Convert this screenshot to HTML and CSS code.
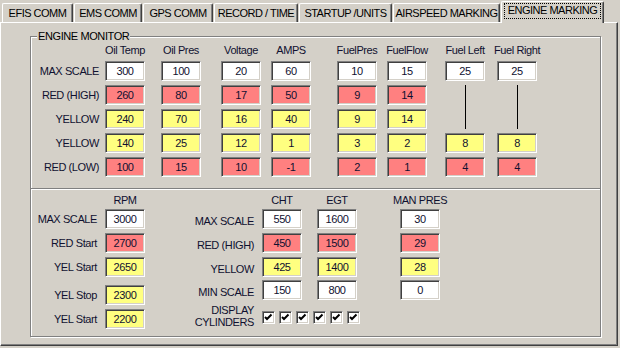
FILE: index.html
```html
<!DOCTYPE html>
<html lang="en">
<head>
  <meta charset="UTF-8" />
  <title>Engine Marking</title>
  <link rel="stylesheet" href="styles.css">
</head>
<body>
  <div class="tabs">
    <div class="tab tab-efis">EFIS COMM</div>
    <div class="tab tab-ems">EMS COMM</div>
    <div class="tab tab-gps">GPS COMM</div>
    <div class="tab tab-record">RECORD / TIME</div>
    <div class="tab tab-startup">STARTUP /UNITS</div>
    <div class="tab tab-airspeed">AIRSPEED MARKING</div>
    <div class="tab tab-engine active"><span class="focus">ENGINE MARKING</span></div>
  </div>

  <div class="page">
    <div class="group">
      <span class="group-title">ENGINE MONITOR</span>

      <div class="monitor">
        <div></div>
        <div class="head">Oil Temp</div>
        <div class="head">Oil Pres</div>
        <div class="head">Voltage</div>
        <div class="head">AMPS</div>
        <div class="head">FuelPres</div>
        <div class="head">FuelFlow</div>
        <div class="head">Fuel Left</div>
        <div class="head">Fuel Right</div>

        <div class="label">MAX SCALE</div>
        <div class="field">300</div>
        <div class="field">100</div>
        <div class="field">20</div>
        <div class="field">60</div>
        <div class="field">10</div>
        <div class="field">15</div>
        <div class="field">25</div>
        <div class="field">25</div>

        <div class="link link-left"></div>
        <div class="link link-right"></div>

        <div class="label">RED (HIGH)</div>
        <div class="field red">260</div>
        <div class="field red">80</div>
        <div class="field red">17</div>
        <div class="field red">50</div>
        <div class="field red">9</div>
        <div class="field red">14</div>

        <div class="label">YELLOW</div>
        <div class="field yellow">240</div>
        <div class="field yellow">70</div>
        <div class="field yellow">16</div>
        <div class="field yellow">40</div>
        <div class="field yellow">9</div>
        <div class="field yellow">14</div>

        <div class="label">YELLOW</div>
        <div class="field yellow">140</div>
        <div class="field yellow">25</div>
        <div class="field yellow">12</div>
        <div class="field yellow">1</div>
        <div class="field yellow">3</div>
        <div class="field yellow">2</div>
        <div class="field yellow">8</div>
        <div class="field yellow">8</div>

        <div class="label">RED (LOW)</div>
        <div class="field red">100</div>
        <div class="field red">15</div>
        <div class="field red">10</div>
        <div class="field red">-1</div>
        <div class="field red">2</div>
        <div class="field red">1</div>
        <div class="field red">4</div>
        <div class="field red">4</div>
      </div>

      <div class="lower">
        <div class="block rpm">
          <div class="row top"><div class="label"></div><div class="head">RPM</div></div>
          <div class="row"><div class="label">MAX SCALE</div><div class="field">3000</div></div>
          <div class="row"><div class="label">RED Start</div><div class="field red">2700</div></div>
          <div class="row"><div class="label">YEL Start</div><div class="field yellow">2650</div></div>
          <div class="row spaced"><div class="label">YEL Stop</div><div class="field yellow">2300</div></div>
          <div class="row"><div class="label">YEL Start</div><div class="field yellow">2200</div></div>
        </div>

        <div class="block temps">
          <div class="row top"><div class="label"></div><div class="head">CHT</div><div class="head egt">EGT</div></div>
          <div class="row"><div class="label">MAX SCALE</div><div class="field">550</div><div class="field egt">1600</div></div>
          <div class="row"><div class="label">RED (HIGH)</div><div class="field red">450</div><div class="field red egt">1500</div></div>
          <div class="row"><div class="label">YELLOW</div><div class="field yellow">425</div><div class="field yellow egt">1400</div></div>
          <div class="row tight"><div class="label">MIN SCALE</div><div class="field">150</div><div class="field egt">800</div></div>
          <div class="row checks">
            <div class="label">DISPLAY<br>CYLINDERS</div>
            <div class="boxes">
              <span class="check"><svg viewBox="0 0 11 11" width="11" height="11"><path d="M2 5 L4 7 L8.5 2.5" /></svg></span>
              <span class="check"><svg viewBox="0 0 11 11" width="11" height="11"><path d="M2 5 L4 7 L8.5 2.5" /></svg></span>
              <span class="check"><svg viewBox="0 0 11 11" width="11" height="11"><path d="M2 5 L4 7 L8.5 2.5" /></svg></span>
              <span class="check"><svg viewBox="0 0 11 11" width="11" height="11"><path d="M2 5 L4 7 L8.5 2.5" /></svg></span>
              <span class="check"><svg viewBox="0 0 11 11" width="11" height="11"><path d="M2 5 L4 7 L8.5 2.5" /></svg></span>
              <span class="check"><svg viewBox="0 0 11 11" width="11" height="11"><path d="M2 5 L4 7 L8.5 2.5" /></svg></span>
            </div>
          </div>
        </div>

        <div class="block man">
          <div class="row top"><div class="head">MAN PRES</div></div>
          <div class="row"><div class="field">30</div></div>
          <div class="row"><div class="field red">29</div></div>
          <div class="row"><div class="field yellow">28</div></div>
          <div class="row tight"><div class="field">0</div></div>
        </div>
      </div>
    </div>
  </div>
</body>
</html>
```

FILE: styles.css
```css
body {
  margin: 0;
  background-color: #d4d0c8;
  color: #101030;
  font-family: 'Liberation Sans', Arial, sans-serif;
  font-size: 11px;
  letter-spacing: -0.4px;
}

/* tab strip */
.tabs {
  display: flex;
  align-items: flex-end;
  gap: 1px;
  height: 22px;
  padding-left: 2px;
}
.tab {
  box-sizing: border-box;
  height: 19px;
  padding-top: 3px;
  border-top: 1px solid #fff;
  border-left: 1px solid #fff;
  border-right: 1px solid #404040;
  border-radius: 2px 2px 0 0;
  box-shadow: inset -1px 0 0 #808080;
  background-color: #d4d0c8;
  color: #000;
  line-height: 13px;
  text-align: center;
  white-space: nowrap;
  letter-spacing: -0.5px;
}
.tab-efis { width: 71px; }
.tab-ems { width: 68px; }
.tab-gps { width: 70px; }
.tab-record { width: 84px; }
.tab-startup { width: 93px; }
.tab-airspeed { width: 107px; }
.tab-engine { width: 103px; }
.tab.active {
  position: relative;
  z-index: 1;
  height: 22px;
  margin-bottom: -1px;
  padding: 1px 2px 0 2px;
}
.focus {
  display: block;
  height: 16px;
  box-sizing: border-box;
  border: 1px dotted #000;
  line-height: 13px;
}

/* tab page */
.page {
  box-sizing: border-box;
  width: 618px;
  height: 324px;
  padding: 13px 0 0 29px;
  border-top: 1px solid #fff;
  border-left: 1px solid #fff;
  border-right: 1px solid #404040;
  border-bottom: 1px solid #404040;
  box-shadow: inset -1px -1px 0 #808080;
}

.group {
  position: relative;
  box-sizing: border-box;
  width: 571px;
  height: 301px;
  border: 1px solid #808080;
  box-shadow: inset 1px 1px 0 #fff, 1px 1px 0 #fff;
}
.group-title {
  position: absolute;
  top: -7px;
  left: 6px;
  padding: 0 1px;
  background-color: #d4d0c8;
  line-height: 13px;
  color: #000;
}

/* common bits */
.head {
  display: flex;
  justify-content: center;
  width: 40px;
  line-height: 14px;
  white-space: nowrap;
}
.label {
  display: flex;
  align-items: center;
  justify-content: flex-end;
  padding-right: 6px;
  white-space: nowrap;
}
.field {
  box-sizing: border-box;
  display: flex;
  align-items: center;
  justify-content: center;
  width: 40px;
  height: 20px;
  border: 1px solid;
  border-color: #808080 #fff #fff #808080;
  box-shadow: inset 1px 1px 0 #404040, inset -1px -1px 0 #d4d0c8;
  background-color: #fff;
}
.red { background-color: #ff8080; }
.yellow { background-color: #ffff80; }

/* upper table */
.monitor {
  box-sizing: border-box;
  display: grid;
  grid-template-columns: 74px 56px 60px 50px 66px 50px 58px 52px 1fr;
  grid-template-rows: 14px repeat(5, 20px);
  row-gap: 4px;
  height: 152px;
  padding-top: 6px;
  border-bottom: 1px solid #808080;
}
.link {
  grid-row: 3 / span 2;
  display: flex;
  justify-content: center;
  width: 40px;
}
.link::before {
  content: "";
  width: 1px;
  background-color: #000;
}
.link-left { grid-column: 8; }
.link-right { grid-column: 9; }

/* lower blocks */
.lower {
  display: flex;
  align-items: flex-start;
  padding-top: 3px;
  border-top: 1px solid #fff;
}
.block {
  display: flex;
  flex-direction: column;
  gap: 4px;
}
.row {
  display: flex;
  height: 20px;
}
.row.top { height: 12px; }
.row.spaced { margin-top: 4px; }
.row.tight { margin-top: -1px; }

.rpm .label {
  box-sizing: border-box;
  width: 74px;
  padding-right: 8px;
}
.temps .label {
  box-sizing: border-box;
  width: 117px;
  padding-right: 8px;
  padding-top: 3px;
}
.temps .egt { margin-left: 15px; }
.man { margin-left: 40px; }

.row.checks {
  height: 26px;
  margin-top: -1px;
  align-items: center;
}
.row.checks .label {
  padding-top: 0;
  line-height: 12.5px;
  text-align: right;
}
.boxes {
  display: flex;
  gap: 4px;
  padding-top: 2px;
}
.check {
  box-sizing: border-box;
  display: flex;
  width: 13px;
  height: 13px;
  border: 1px solid;
  border-color: #808080 #fff #fff #808080;
  box-shadow: inset 1px 1px 0 #404040, inset -1px -1px 0 #d4d0c8;
  background-color: #fff;
}
.check svg path {
  fill: none;
  stroke: #000;
  stroke-width: 2;
}
```
